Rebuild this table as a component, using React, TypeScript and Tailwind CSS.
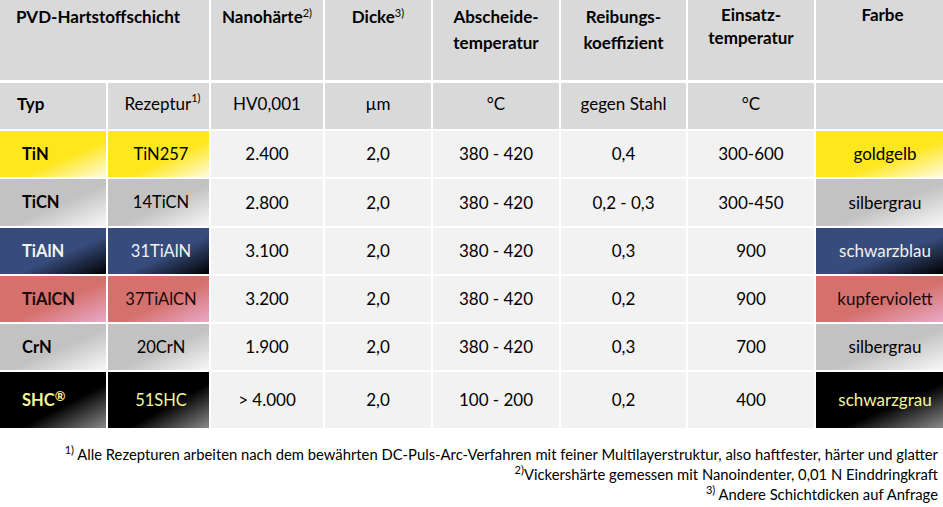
import React from "react";

type Row = {
  typ: React.ReactNode;
  rez: string;
  hv: string;
  dicke: string;
  temp: string;
  reib: string;
  einsatz: string;
  farbe: string;
  bg: string;
  text: string;
  h: string;
};

const rows: Row[] = [
  { typ: "TiN", rez: "TiN257", hv: "2.400", dicke: "2,0", temp: "380 - 420", reib: "0,4", einsatz: "300-600", farbe: "goldgelb", bg: "bg-[linear-gradient(to_bottom_right,#ffe71e_60%,#fffbe0_100%)]", text: "text-black", h: "h-[46px]" },
  { typ: "TiCN", rez: "14TiCN", hv: "2.800", dicke: "2,0", temp: "380 - 420", reib: "0,2 - 0,3", einsatz: "300-450", farbe: "silbergrau", bg: "bg-[linear-gradient(to_bottom_right,#c2c2c2_55%,#f8f8f8_100%)]", text: "text-black", h: "h-[47px]" },
  { typ: "TiAlN", rez: "31TiAlN", hv: "3.100", dicke: "2,0", temp: "380 - 420", reib: "0,3", einsatz: "900", farbe: "schwarzblau", bg: "bg-[linear-gradient(to_bottom_right,#374c7c_58%,#000000_100%)]", text: "text-[#f2f2f2]", h: "h-[46px]" },
  { typ: "TiAlCN", rez: "37TiAlCN", hv: "3.200", dicke: "2,0", temp: "380 - 420", reib: "0,2", einsatz: "900", farbe: "kupferviolett", bg: "bg-[linear-gradient(to_bottom_right,#d5716d_56%,#e9a9c8_100%)]", text: "text-[#1a0a0a]", h: "h-[46px]" },
  { typ: "CrN", rez: "20CrN", hv: "1.900", dicke: "2,0", temp: "380 - 420", reib: "0,3", einsatz: "700", farbe: "silbergrau", bg: "bg-[linear-gradient(to_bottom_right,#c2c2c2_55%,#f8f8f8_100%)]", text: "text-black", h: "h-[46px]" },
  { typ: <>SHC<sup className="text-[13px] relative -top-[4px] align-baseline">®</sup></>, rez: "51SHC", hv: "> 4.000", dicke: "2,0", temp: "100 - 200", reib: "0,2", einsatz: "400", farbe: "schwarzgrau", bg: "bg-[linear-gradient(to_bottom_right,#000000_60%,#8a8a8a_100%)]", text: "text-[#f5f59a]", h: "h-[56px]" },
];

const Sup = ({ children }: { children: React.ReactNode }) => (
  <sup className="text-[11px] relative -top-[6px] align-baseline font-normal">{children}</sup>
);

export default function App() {
  const font = { fontFamily: "Lato, 'Open Sans', sans-serif" };
  return (
    <div className="w-[943px] h-[507px] bg-white overflow-hidden text-black" style={font}>
      <div className="grid grid-cols-[106px_101px_112px_106px_126px_125px_126px_127px] gap-x-[2px] bg-white">
        {/* header row 1 */}
        <div className="col-span-2 h-[80px] bg-[#d9d9d9] pl-[16px] pt-[4px] font-bold text-[17px] leading-[26px]">PVD-Hartstoffschicht</div>
        <div className="h-[80px] bg-[#d9d9d9] text-center pt-[4px] font-bold text-[17px] leading-[26px]">Nanohärte<Sup>2)</Sup></div>
        <div className="h-[80px] bg-[#d9d9d9] text-center pt-[4px] font-bold text-[17px] leading-[26px]">Dicke<Sup>3)</Sup></div>
        <div className="h-[80px] bg-[#d9d9d9] text-center pt-[4px] font-bold text-[17px] leading-[26px]">Abscheide-<br />temperatur</div>
        <div className="h-[80px] bg-[#d9d9d9] text-center pt-[4px] font-bold text-[17px] leading-[26px]">Reibungs-<br />koeffizient</div>
        <div className="h-[80px] bg-[#d9d9d9] text-center pt-[3px] font-bold text-[17px] leading-[23px]">Einsatz-<br />temperatur</div>
        <div className="h-[80px] bg-[#d9d9d9] text-center pt-[3px] pl-[6px] font-bold text-[17px] leading-[23px]">Farbe</div>

        {/* header row 2 */}
        <div className="col-span-8 h-[3px]" />
        <div className="h-[46px] bg-[#d9d9d9] flex items-center pb-[4px] pl-[17px] font-bold text-[17px]">Typ</div>
        <div className="h-[46px] bg-[#d9d9d9] flex items-center justify-center pb-[4px] pl-[8px] text-[17px]">Rezeptur<Sup>1)</Sup></div>
        <div className="h-[46px] bg-[#d9d9d9] flex items-center justify-center pb-[4px] text-[17px]">HV0,001</div>
        <div className="h-[46px] bg-[#d9d9d9] flex items-center justify-center pb-[4px] text-[17px]">µm</div>
        <div className="h-[46px] bg-[#d9d9d9] flex items-center justify-center pb-[4px] text-[17px]">°C</div>
        <div className="h-[46px] bg-[#d9d9d9] flex items-center justify-center pb-[4px] text-[17px]">gegen Stahl</div>
        <div className="h-[46px] bg-[#d9d9d9] flex items-center justify-center pb-[4px] text-[17px]">°C</div>
        <div className="h-[46px] bg-[#d9d9d9]" />

        {rows.map((r, i) => (
          <React.Fragment key={i}>
            <div className="col-span-8 h-[2px]" />
            <div className={`${r.h} ${r.bg} ${r.text} flex items-center pl-[22px] font-bold text-[16.5px]`}>{r.typ}</div>
            <div className={`${r.h} ${r.bg} ${r.text} flex items-center justify-center pl-[5px] text-[16.5px]`}>{r.rez}</div>
            <div className={`${r.h} bg-[#f2f2f2] flex items-center justify-center text-[17px]`}>{r.hv}</div>
            <div className={`${r.h} bg-[#f2f2f2] flex items-center justify-center text-[17px]`}>{r.dicke}</div>
            <div className={`${r.h} bg-[#f2f2f2] flex items-center justify-center text-[17px]`}>{r.temp}</div>
            <div className={`${r.h} bg-[#f2f2f2] flex items-center justify-center text-[17px]`}>{r.reib}</div>
            <div className={`${r.h} bg-[#f2f2f2] flex items-center justify-center text-[17px]`}>{r.einsatz}</div>
            <div className={`${r.h} ${r.bg} ${r.text} flex items-center justify-center pl-[11px] text-[17px]`}>{r.farbe}</div>
          </React.Fragment>
        ))}
      </div>

      <div className="flex flex-col items-end pr-[5px] pt-[16px] text-[14.8px] leading-[20px] text-black">
        <div><Sup>1)</Sup> Alle Rezepturen arbeiten nach dem bewährten DC-Puls-Arc-Verfahren mit feiner Multilayerstruktur, also haftfester, härter und glatter</div>
        <div><Sup>2)</Sup>Vickershärte gemessen mit Nanoindenter, 0,01 N Einddringkraft</div>
        <div><Sup>3)</Sup> Andere Schichtdicken auf Anfrage</div>
      </div>
    </div>
  );
}
